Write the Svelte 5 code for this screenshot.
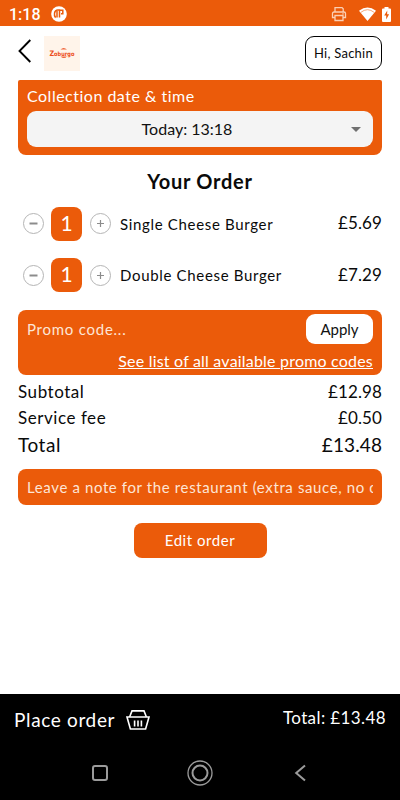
<script lang="ts">
  let items = [
    { name: 'Single Cheese Burger', qty: 1, price: 5.69 },
    { name: 'Double Cheese Burger', qty: 1, price: 7.29 }
  ];
  const serviceFee = 0.5;

  $: subtotal = items.reduce((sum, i) => sum + i.qty * i.price, 0);
  $: total = subtotal + serviceFee;

  const money = (n: number) => '£' + n.toFixed(2);

  function change(index: number, by: number) {
    items[index].qty = Math.max(0, items[index].qty + by);
  }
</script>

<div class="screen">
  <div class="status-bar">
    <span class="clock">1:18</span>
    <svg class="app-icon" width="16" height="16" viewBox="0 0 16 16">
      <circle cx="8" cy="8" r="7.8" fill="#fff" />
      <path d="M8.500 11.500V4H6.800C3 4 2.600 9.600 4.600 11.600M6 4.500v7M8.500 4.200h3.300v3.600H10" stroke="#eb5b0a" stroke-width="1.500" fill="none" />
    </svg>
    <div class="status-icons">
      <svg width="16" height="16" viewBox="0 0 16 16" fill="none" stroke="#fbd0b5" stroke-width="1.3">
        <path d="M4 6V1.600h7l1.200 1.200V6M4 11.500H1.500V7.500Q1.500 6 3 6h10q1.500 0 1.500 1.500v4H12" />
        <path d="M4 9.500h8v5H4z" />
        <path d="M11.300 7.800h1.400" />
      </svg>
      <svg class="wifi" width="17" height="14" viewBox="0 0 17 14">
        <path d="M0 3.800Q8.500-3 17 3.800L8.500 14z" fill="#fff" />
        <path d="M1.800 5.400Q8.500 0 15.200 5.400" fill="none" stroke="#f39b68" stroke-width=".9" />
      </svg>
      <svg class="battery" width="9" height="15" viewBox="0 0 9 15">
        <path d="M2.500 0h4v1.500H8q1 0 1 1V14q0 1-1 1H1q-1 0-1-1V2.500q0-1 1-1h1.500z" fill="#fff" />
        <path d="M5.300 3.500 2.200 8.600h2v3.800l2.900-5.200H5.100z" fill="#eb5b0a" />
      </svg>
    </div>
  </div>

  <header>
    <svg class="back" width="14" height="24" viewBox="0 0 14 24">
      <path d="M12.300 1 1.500 12l10.800 11" fill="none" stroke="#000" stroke-width="1.900" />
    </svg>
    <div class="logo">
      <svg width="32" height="14" viewBox="0 0 32 14">
        <path d="M14.500 3.600q3-3 6.500 0zM14.500 10.500h6.500q-3 3-6.500 0z" fill="#ef6338" />
        <text x="3.500" y="9.500" textLength="25" lengthAdjust="spacingAndGlyphs"><tspan class="initial">Z</tspan>oburgo</text>
      </svg>
    </div>
    <button class="user">Hi, Sachin</button>
  </header>

  <main>
    <section class="panel collection">
      <div class="label">Collection date &amp; time</div>
      <div class="select">
        <span>Today: 13:18</span>
        <i class="arrow"></i>
      </div>
    </section>

    <h1>Your Order</h1>

    {#each items as item, i}
      <div class="item">
        <button class="step" aria-label="Remove one" on:click={() => change(i, -1)}>
          <svg width="9" height="9" viewBox="0 0 9 9"><path d="M.5 4.500h8" stroke="#8c8c8c" stroke-width="2" /></svg>
        </button>
        <span class="qty">{item.qty}</span>
        <button class="step" aria-label="Add one" on:click={() => change(i, 1)}>
          <svg width="9" height="9" viewBox="0 0 9 9"><path d="M1 4.500h7M4.500 1v7" stroke="#8c8c8c" stroke-width="1.200" /></svg>
        </button>
        <span class="name">{item.name}</span>
        <span class="price">{money(item.price)}</span>
      </div>
    {/each}

    <section class="panel promo">
      <div class="promo-row">
        <span class="promo-input">Promo code...</span>
        <button class="apply">Apply</button>
      </div>
      <div class="promo-link">See list of all available promo codes</div>
    </section>

    <div class="sum"><span class="caption">Subtotal</span><span>{money(subtotal)}</span></div>
    <div class="sum"><span class="caption">Service fee</span><span>{money(serviceFee)}</span></div>
    <div class="sum total"><span class="caption">Total</span><span>{money(total)}</span></div>

    <div class="panel note"><div>Leave a note for the restaurant (extra sauce, no onions)</div></div>

    <button class="edit">Edit order</button>
  </main>

  <footer>
    <span class="place">Place order</span>
    <svg class="basket" width="24" height="20" viewBox="0 0 24 20" fill="none" stroke="#fff" stroke-width="1.600">
      <path d="M3.600 7 6 .9h12L20.400 7" />
      <path d="M1 7h22l-3.400 12H4.400z" />
      <path d="M8.600 10.500v6M12 10.500v6M15.400 10.500v6" />
    </svg>
    <span class="footer-total">Total: {money(total)}</span>
  </footer>

  <nav>
    <svg width="16" height="16" viewBox="0 0 16 16"><rect x="1" y="1" width="14" height="14" rx="2" /></svg>
    <svg width="26" height="26" viewBox="0 0 26 26"><circle cx="13" cy="13" r="12" stroke-width="1.300" /><circle cx="13" cy="13" r="7.500" /></svg>
    <svg width="16" height="18" viewBox="0 0 16 18"><path d="M13 1.500 4.200 9l8.800 7.500" /></svg>
  </nav>
</div>

<style>
  :global(body) {
    margin: 0;
    background: #fff;
  }

  .screen {
    display: flex;
    flex-direction: column;
    width: 400px;
    height: 800px;
    overflow: hidden;
    background: #fff;
    color: #0a0a0a;
    font-family: Lato, "Liberation Sans", sans-serif;
    font-variant-ligatures: none;
  }

  button {
    padding: 0;
    border: none;
    background: none;
    color: inherit;
    font-family: inherit;
    cursor: pointer;
  }

  svg {
    display: block;
    flex: none;
  }

  .status-bar {
    display: flex;
    align-items: center;
    box-sizing: border-box;
    flex: none;
    height: 26px;
    padding: 2px 9px 0;
    background: #eb5b0a;
    color: #fff;
  }

  .clock {
    width: 42px;
    font: 500 16px Roboto, sans-serif;
  }

  .status-icons {
    display: flex;
    align-items: center;
    margin-left: auto;
  }

  .wifi {
    margin-left: 12px;
  }

  .battery {
    margin-left: 6px;
  }

  header {
    display: flex;
    align-items: center;
    flex: none;
    height: 54px;
    padding: 0 18px;
  }

  .back {
    margin-top: -4px;
  }

  .logo {
    display: flex;
    align-items: center;
    justify-content: center;
    width: 36px;
    height: 35px;
    margin-left: 12px;
    background: #fff4ea;
  }

  .logo text {
    font: bold 6px "DejaVu Sans", sans-serif;
    fill: #ec4e20;
  }

  .logo .initial {
    font-size: 7.5px;
  }

  .user {
    box-sizing: border-box;
    width: 77px;
    height: 34px;
    margin-left: auto;
    border: 1px solid #000;
    border-radius: 9px;
    font-size: 13px;
    letter-spacing: 0.25px;
  }

  main {
    flex: 1;
    padding: 0 18px;
  }

  .panel {
    box-sizing: border-box;
    padding: 0 9px;
    border-radius: 8px;
    background: #eb5b0a;
    color: #fff;
  }

  .collection {
    height: 75px;
    border-radius: 2px 2px 8px 8px;
  }

  .label {
    height: 31px;
    font-size: 16px;
    letter-spacing: 0.5px;
    line-height: 32px;
  }

  .select {
    display: flex;
    align-items: center;
    justify-content: center;
    position: relative;
    box-sizing: border-box;
    height: 36px;
    padding: 0 26px 2px 0;
    border-radius: 9px;
    background: #f4f4f4;
    color: #111;
    font-size: 16px;
  }

  .arrow {
    position: absolute;
    right: 12px;
    top: 16px;
    border: 5.5px solid transparent;
    border-top-color: #707070;
    border-bottom: none;
  }

  h1 {
    margin: 0;
    height: 43px;
    padding-top: 10px;
    box-sizing: border-box;
    font-size: 20px;
    font-weight: bold;
    letter-spacing: 0.75px;
    line-height: 32px;
    text-align: center;
  }

  .item {
    display: flex;
    align-items: center;
    height: 51.5px;
  }

  .step {
    display: flex;
    align-items: center;
    justify-content: center;
    box-sizing: border-box;
    width: 21px;
    height: 21px;
    border: 1px solid #b5b5b5;
    border-radius: 50%;
  }

  .step:first-child {
    margin-left: 5px;
  }

  .qty {
    width: 31px;
    height: 34px;
    margin: 0 8px 0 7px;
    border-radius: 8px;
    background: #eb5b0a;
    color: #fff;
    font-size: 21px;
    line-height: 32px;
    text-align: center;
  }

  .name {
    margin-left: 9px;
    font-size: 15px;
    letter-spacing: 0.67px;
  }

  .price {
    margin-left: auto;
    padding-bottom: 2px;
    font-size: 17px;
    letter-spacing: 0.1px;
  }

  .promo {
    height: 65px;
    margin-top: 9px;
    padding-top: 4px;
  }

  .promo-row {
    display: flex;
    justify-content: space-between;
    align-items: center;
  }

  .promo-input {
    padding-bottom: 1px;
    color: #fde5d6;
    font-size: 15px;
    letter-spacing: 0.75px;
  }

  .apply {
    width: 67px;
    height: 30px;
    border-radius: 9px;
    background: #fff;
    color: #111;
    font-size: 15px;
  }

  .promo-link {
    font-size: 16px;
    letter-spacing: 0.2px;
    line-height: 34px;
    text-align: right;
    text-decoration: underline;
  }

  .sum {
    display: flex;
    justify-content: space-between;
    height: 26px;
    font-size: 17px;
    letter-spacing: 0.1px;
    line-height: 34px;
  }

  .caption {
    letter-spacing: 0.55px;
  }

  .total {
    font-size: 19px;
    line-height: 36px;
  }

  .note {
    height: 36px;
    margin-top: 16px;
    color: #fde5d6;
    font-size: 15px;
    letter-spacing: 0.62px;
    line-height: 36px;
  }

  .note div {
    overflow: hidden;
    white-space: nowrap;
  }

  .edit {
    display: block;
    width: 133px;
    height: 35px;
    margin: 18px auto 0;
    padding-bottom: 2px;
    border-radius: 8px;
    background: #eb5b0a;
    color: #fff;
    font-size: 15px;
    letter-spacing: 0.55px;
  }

  footer {
    display: flex;
    align-items: center;
    box-sizing: border-box;
    flex: none;
    height: 53px;
    padding: 0 14px 2px;
    background: #000;
    color: #fff;
  }

  .place {
    width: 101px;
    font-size: 19px;
    letter-spacing: 0.65px;
    white-space: nowrap;
  }

  .basket {
    margin-left: 11px;
  }

  .footer-total {
    margin-left: auto;
    padding-bottom: 4px;
    font-size: 17px;
    letter-spacing: 0.4px;
  }

  nav {
    display: flex;
    align-items: center;
    justify-content: center;
    gap: 79px;
    box-sizing: border-box;
    flex: none;
    height: 53px;
    padding-bottom: 1px;
    background: #000;
  }

  nav svg {
    fill: none;
    stroke: #9b9b9b;
    stroke-width: 2;
  }
</style>
